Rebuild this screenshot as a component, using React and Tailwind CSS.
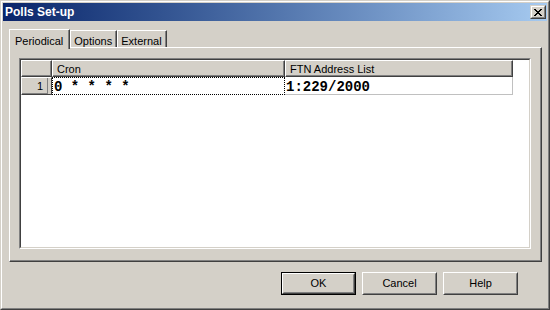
import React from 'react';

// classic win2k style dialog - polls setup

const Raised = ({ className = '', inner = '', children }) => (
    <div className={`border border-t-[#d4d0c8] border-l-[#d4d0c8] border-r-[#404040] border-b-[#404040] ${className}`}>
        <div className={`h-full border border-t-white border-l-white border-r-[#808080] border-b-[#808080] ${inner}`}>
            {children}
        </div>
    </div>
);

const CloseGlyph = () => (
    <svg width="8" height="7" viewBox="0 0 8 7" shapeRendering="crispEdges">
        <path
            fill="#000"
            d="M0 0h2v1H0zM6 0h2v1H6zM1 1h2v1H1zM5 1h2v1H5zM2 2h4v1H2zM3 3h2v1H3zM2 4h4v1H2zM1 5h2v1H1zM5 5h2v1H5zM0 6h2v1H0zM6 6h2v1H6z"
        />
    </svg>
);

const Tab = ({ label, active }) => {
    if (active) {
        return (
            <div className="relative z-10 -mb-[2px] h-[20px] border-l border-t border-r border-l-white border-t-white border-r-[#404040] bg-[#d4d0c8]">
                <div className="h-full border-r border-r-[#808080] px-[5px] pt-[3px]">{label}</div>
            </div>
        );
    }
    return (
        <div className="h-[17px] border-l border-t border-r border-l-white border-t-white border-r-[#404040] bg-[#d4d0c8]">
            <div className="h-full border-r border-r-[#808080] px-[3px] pt-[2px]">{label}</div>
        </div>
    );
};

const Button = ({ label, isDefault }) => (
    <div className={`w-[75px] h-[23px] ${isDefault ? 'border border-black' : ''}`}>
        <div className="h-full border border-t-white border-l-white border-r-[#404040] border-b-[#404040]">
            <div className="h-full flex items-center justify-center border border-t-[#d4d0c8] border-l-[#d4d0c8] border-r-[#808080] border-b-[#808080]">
                {label}
            </div>
        </div>
    </div>
);

const HeaderCell = ({ className = '', children }) => (
    <div className={`h-[17px] bg-[#d4d0c8] border-l border-t border-l-white border-t-white border-r border-b border-r-[#404040] border-b-[#404040] ${className}`}>
        <div className="h-full border-r border-b border-r-[#808080] border-b-[#808080] px-[4px] leading-[16px]">
            {children}
        </div>
    </div>
);

export default function App() {
    return (
        <div className="w-[550px] h-[310px] bg-[#d4d0c8] text-black text-[11px] font-['Liberation_Sans',Arial,sans-serif]">
            <Raised className="h-full" inner="p-px flex flex-col">
                {/* title bar */}
                <div className="h-[18px] flex items-center justify-between bg-linear-to-r from-[#0a246a] to-[#a6caf0] pl-[2px] pr-[1px]">
                    <span className="text-white font-bold text-[12px]">Polls Set-up</span>
                    <Raised className="w-[16px] h-[14px] bg-[#d4d0c8]" inner="flex items-center justify-center">
                        <CloseGlyph />
                    </Raised>
                </div>

                <div className="flex flex-col pl-[6px]">
                    <div className="flex items-end mt-[7px] h-[19px]">
                        <Tab label="Periodical" active />
                        <Tab label="Options" />
                        <Tab label="External" />
                    </div>

                    {/* tab panel */}
                    <div className="w-[533px] h-[215px] border border-l-white border-t-white border-r-[#404040] border-b-[#404040]">
                        <div className="h-full border-r border-b border-r-[#808080] border-b-[#808080] px-[9px] pt-[10px]">
                            <div className="h-[191px] border border-t-[#808080] border-l-[#808080] border-r-white border-b-white">
                                <div className="h-full border border-t-[#404040] border-l-[#404040] border-r-[#d4d0c8] border-b-[#d4d0c8] bg-white">
                                    <div className="flex">
                                        <HeaderCell className="w-[31px]" />
                                        <HeaderCell className="w-[233px]">Cron</HeaderCell>
                                        <HeaderCell className="w-[228px]">FTN Address List</HeaderCell>
                                    </div>
                                    <div className="flex h-[18px]">
                                        <HeaderCell className="w-[31px] h-[18px] text-right pr-[3px]">1</HeaderCell>
                                        <div className="w-[233px] border border-dotted border-black px-[1px] pt-px font-['Liberation_Mono',monospace] font-bold text-[14px] leading-[16px] whitespace-pre">
                                            0 * * * *
                                        </div>
                                        <div className="w-[228px] border-r border-b border-[#c0c0c0] px-[1px] pt-[2px] font-['Liberation_Mono',monospace] font-bold text-[14px] leading-[16px]">
                                            1:229/2000
                                        </div>
                                    </div>
                                </div>
                            </div>
                        </div>
                    </div>

                    <div className="flex justify-end gap-[6px] mt-[10px] pr-[29px]">
                        <Button label="OK" isDefault />
                        <Button label="Cancel" />
                        <Button label="Help" />
                    </div>
                </div>
            </Raised>
        </div>
    );
}
